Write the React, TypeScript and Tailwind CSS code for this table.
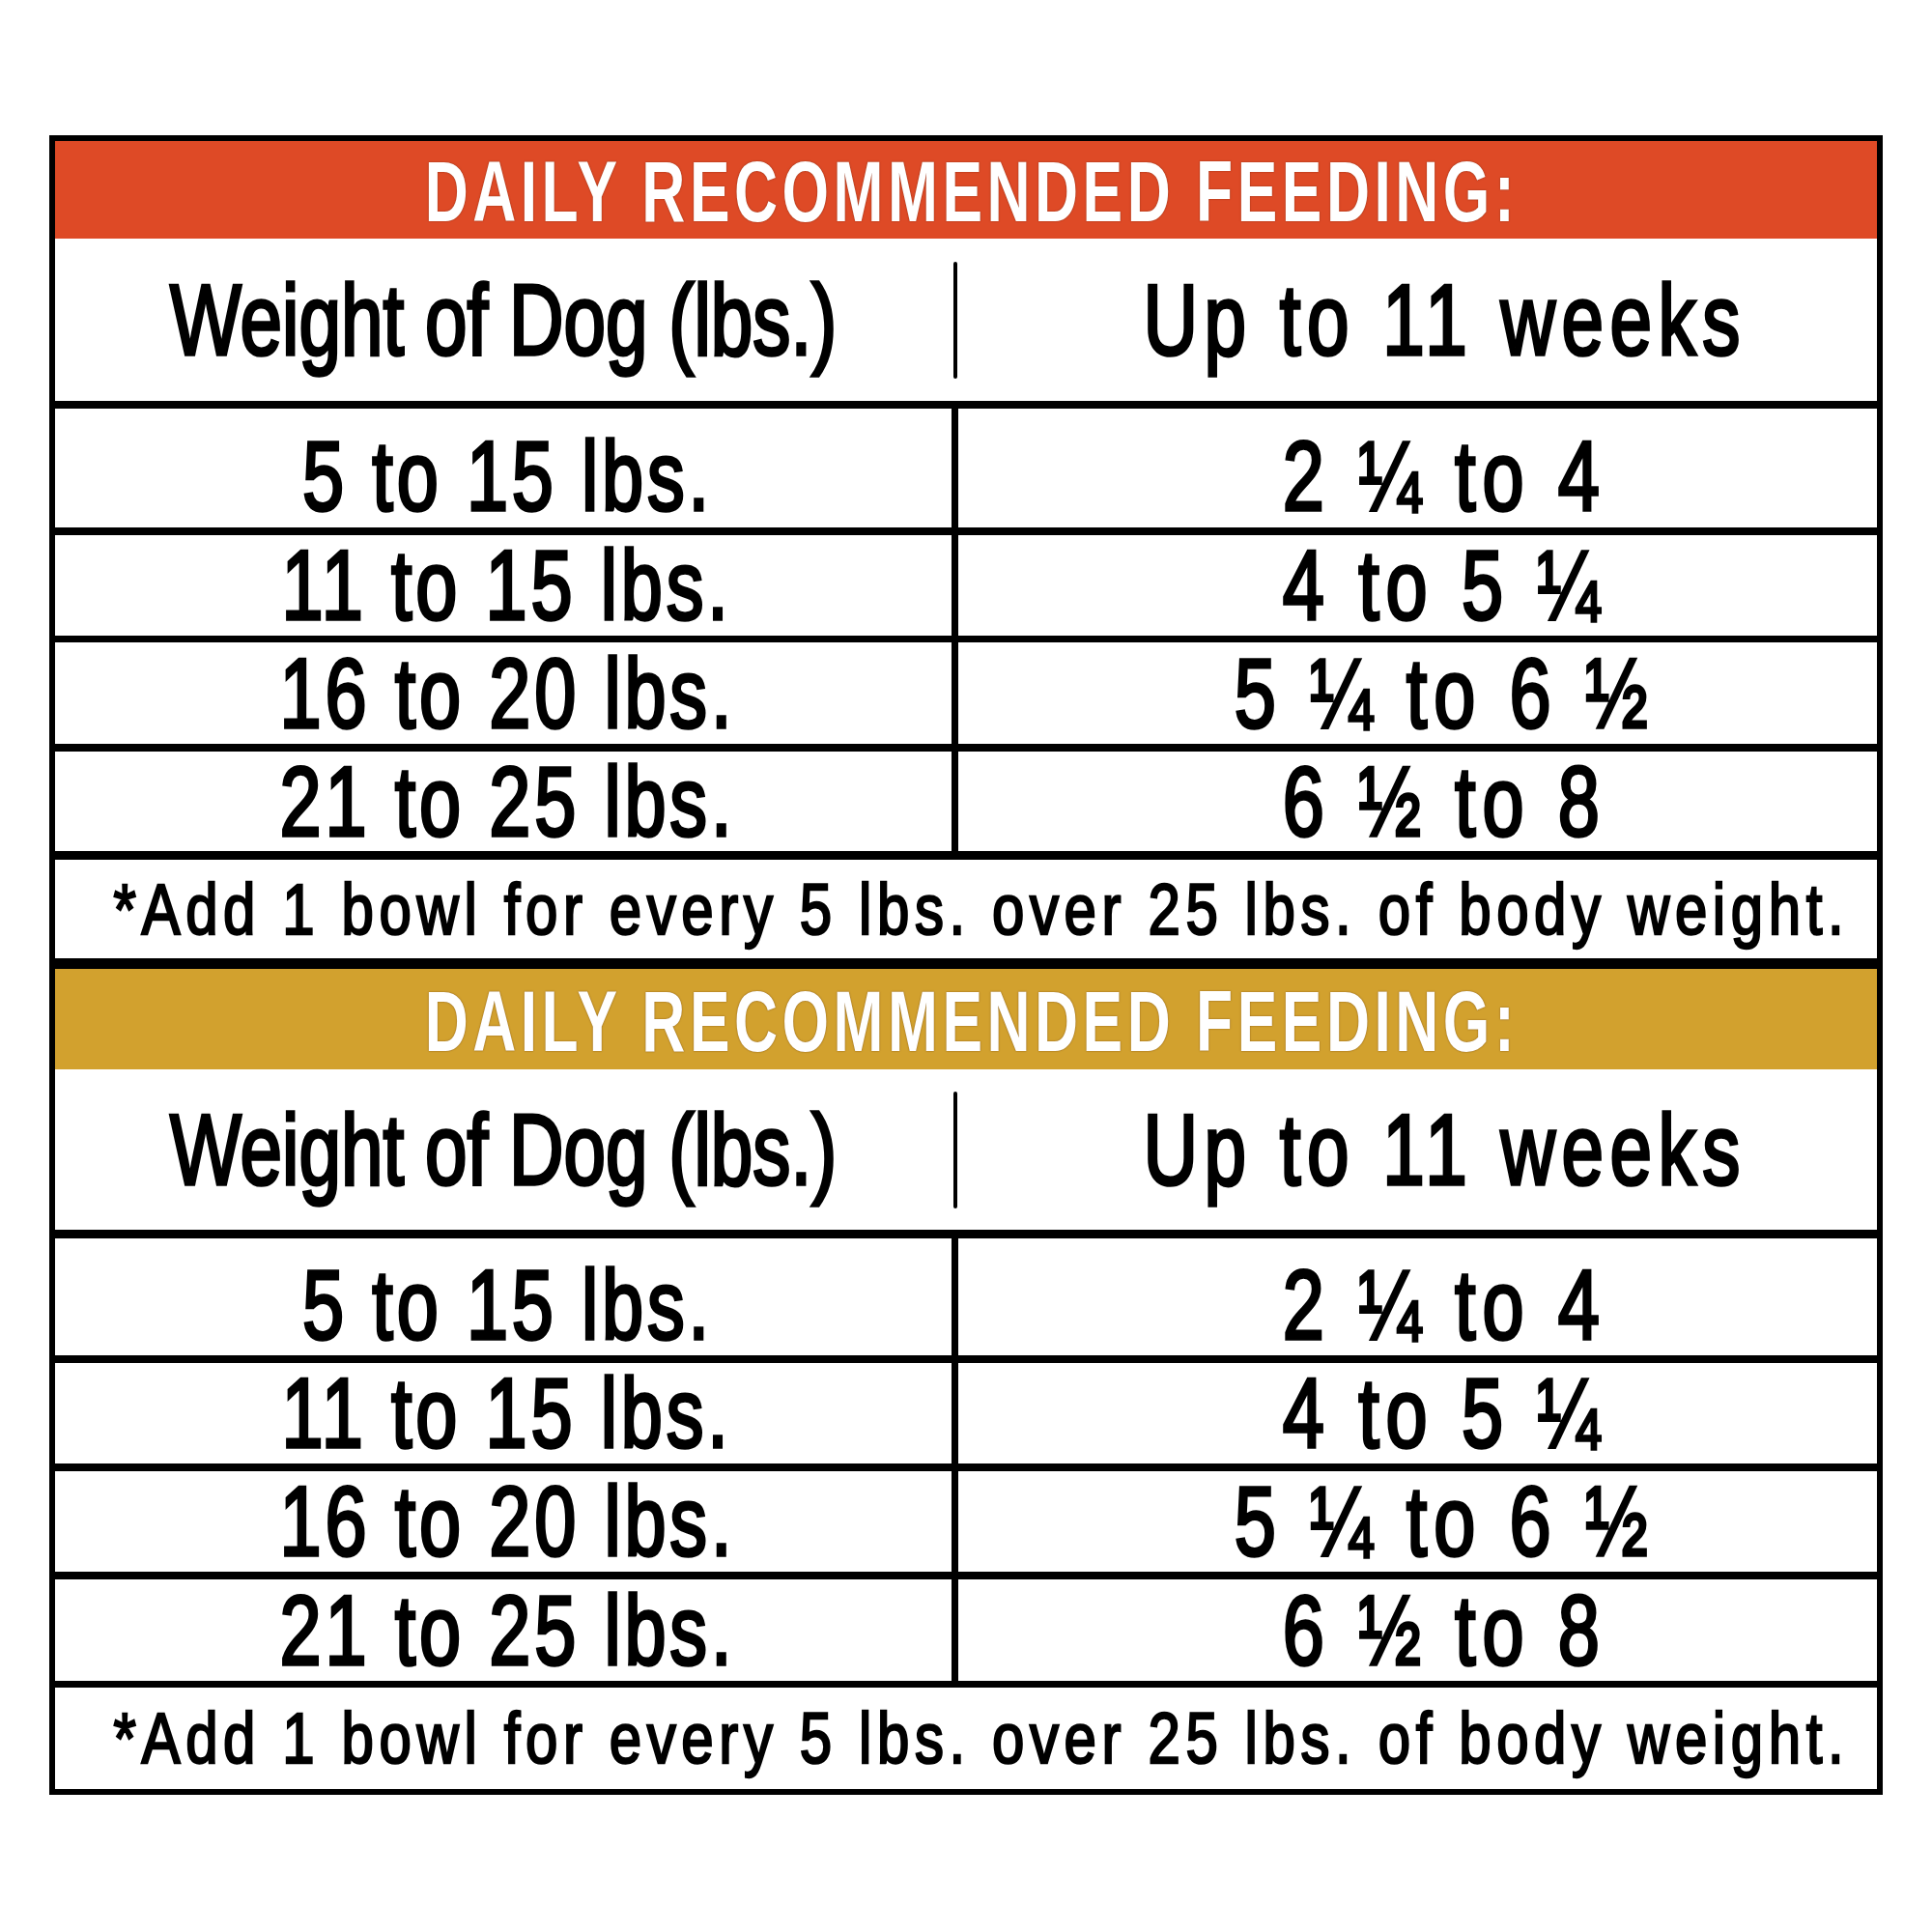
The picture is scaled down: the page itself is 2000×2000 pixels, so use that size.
import React from 'react';

const rows = [
  ['5 to 15 lbs.', '2 ¼ to 4'],
  ['11 to 15 lbs.', '4 to 5 ¼'],
  ['16 to 20 lbs.', '5 ¼ to 6 ½'],
  ['21 to 25 lbs.', '6 ½ to 8'],
];

// heights of the data rows and the black rules under them
type Spec = {
  band: string;
  bandH: string;
  headH: string;
  rowH: string[];
  lineH: string[];
  footH: string;
};

function Txt({ children, className }: { children: React.ReactNode; className: string }) {
  return <span className={`inline-block whitespace-nowrap origin-center ${className}`}>{children}</span>;
}

function FeedingTable({ spec }: { spec: Spec }) {
  return (
    <div className="flex flex-col">
      {/* title band */}
      <div className={`${spec.band} ${spec.bandH} flex items-center justify-center pl-3 pt-1`}>
        <Txt className="scale-x-[0.7] tracking-[6.5px] text-[89px] leading-none font-bold text-white [text-shadow:0_0_2px_rgba(60,20,0,0.6)]">
          DAILY RECOMMENDED FEEDING:
        </Txt>
      </div>

      {/* column headings */}
      <div className={`grid grid-cols-[928px_7px_1fr] bg-white ${spec.headH}`}>
        <div className="flex items-center justify-center">
          <Txt className="scale-x-[0.76] text-[103px] leading-none [-webkit-text-stroke:3.5px_black]">Weight of Dog (lbs.)</Txt>
        </div>
        <div className="flex items-center justify-center">
          <div className="h-[121px] w-[4px] bg-black rounded-sm" />
        </div>
        <div className="flex items-center justify-center pl-[56px]">
          <Txt className="scale-x-[0.76] tracking-[8.5px] text-[103px] leading-none [-webkit-text-stroke:3.5px_black]">Up to 11 weeks</Txt>
        </div>
      </div>
      <div className={`bg-black ${spec.lineH[0]}`} />

      {rows.map((r, i) => (
        <React.Fragment key={r[0]}>
          <div className={`grid grid-cols-[928px_7px_1fr] ${spec.rowH[i]}`}>
            <div className={`flex items-center justify-center bg-white pl-2 ${i === 0 ? 'pt-4' : ''}`}>
              <Txt className="scale-x-[0.76] tracking-[5px] text-[102px] leading-none [-webkit-text-stroke:3.5px_black]">{r[0]}</Txt>
            </div>
            <div className="bg-black" />
            <div className={`flex items-center justify-center bg-white pl-[56px] ${i === 0 ? 'pt-4' : ''}`}>
              <Txt className="scale-x-[0.76] tracking-[9px] text-[102px] leading-none [-webkit-text-stroke:3.5px_black]">{r[1]}</Txt>
            </div>
          </div>
          <div className={`bg-black ${spec.lineH[i + 1]}`} />
        </React.Fragment>
      ))}

      {/* footnote */}
      <div className={`flex items-center justify-center bg-white pl-8 ${spec.footH}`}>
        <Txt className="scale-x-[0.8] tracking-[7px] text-[75px] leading-none [-webkit-text-stroke:2.5px_black]">
          *Add 1 bowl for every 5 lbs. over 25 lbs. of body weight.
        </Txt>
      </div>
    </div>
  );
}

export default function App() {
  const top: Spec = {
    band: 'bg-[#de4a26]',
    bandH: 'h-[101px]',
    headH: 'h-[168px]',
    rowH: ['h-[123px]', 'h-[104px]', 'h-[105px]', 'h-[103px]'],
    lineH: ['h-[8px]', 'h-[8px]', 'h-[7px]', 'h-[8px]', 'h-[9px]'],
    footH: 'h-[102px]',
  };
  const bottom: Spec = {
    band: 'bg-[#d2a12e]',
    bandH: 'h-[104px]',
    headH: 'h-[166px]',
    rowH: ['h-[121px]', 'h-[104px]', 'h-[104px]', 'h-[105px]'],
    lineH: ['h-[9px]', 'h-[8px]', 'h-[8px]', 'h-[8px]', 'h-[7px]'],
    footH: 'h-[105px]',
  };

  return (
    <div className="w-[2000px] h-[2000px] bg-white pt-[140px] pl-[51px] font-['Liberation_Sans',Arial,sans-serif] text-black">
      <div className="w-[1898px] border-[6px] border-black bg-white flex flex-col">
        <FeedingTable spec={top} />
        <div className="h-[11px] bg-black" />
        <FeedingTable spec={bottom} />
      </div>
    </div>
  );
}
